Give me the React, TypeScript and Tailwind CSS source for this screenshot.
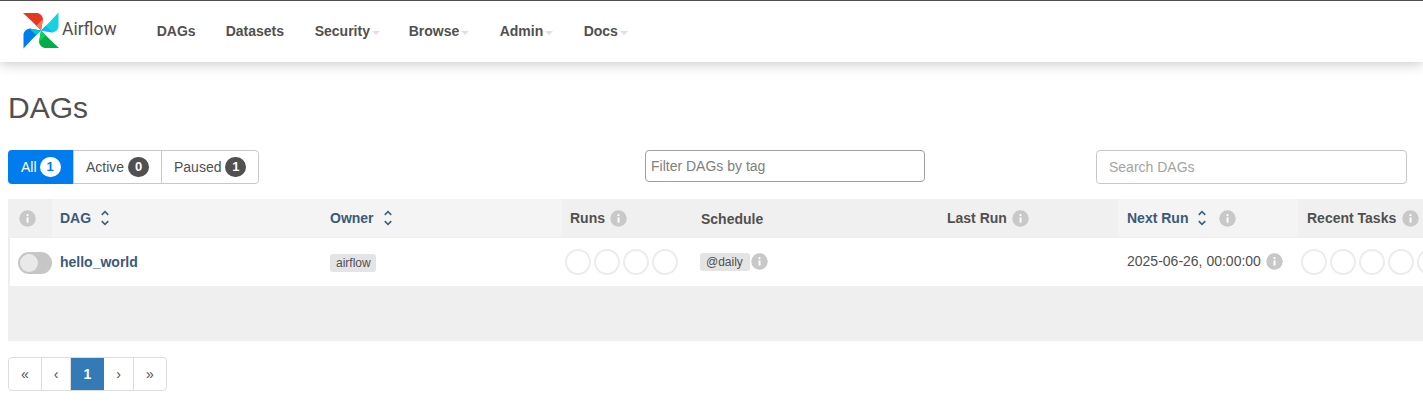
const font = "font-['Liberation_Sans',Arial,sans-serif]";

function Info({ className = "" }: { className?: string }) {
  return (
    <svg width="17" height="17" viewBox="0 0 17 17" className={"shrink-0 " + className}>
      <circle cx="8.5" cy="8.5" r="8.25" fill="#c8c8c8" />
      <rect x="7.6" y="7.4" width="1.9" height="5.2" fill="#fff" />
      <circle cx="8.5" cy="5.2" r="1.1" fill="#fff" />
    </svg>
  );
}

function Sort() {
  return (
    <svg width="20" height="20" viewBox="0 0 24 24" fill="#3f5f7c" className="shrink-0">
      <path d="M12 5.83 15.17 9l1.41-1.41L12 3 7.41 7.59 8.83 9 12 5.83zm0 12.34L8.83 15l-1.41 1.41L12 21l4.59-4.59L15.17 15 12 18.17z" />
    </svg>
  );
}

function Blade({ angle, main, light }: { angle: number; main: string; light: string }) {
  return (
    <g transform={`rotate(${angle} 19 19.5)`}>
      <path d="M1 2 L15.5 2 Q20 3 21 8 L19 19.5 Q11 11 1 2z" fill={main} />
      <path d="M21 8 L19 19.5 L14.5 14.5 Q18 11 21 8z" fill={light} />
    </g>
  );
}

function Logo() {
  return (
    <svg width="38" height="38" viewBox="0 0 38 38" className="shrink-0">
      <Blade angle={0} main="#e43921" light="#ff7557" />
      <Blade angle={90} main="#11d4e0" light="#0cb6ff" />
      <Blade angle={180} main="#00ad46" light="#04d659" />
      <Blade angle={270} main="#017cee" light="#00c7d4" />
    </svg>
  );
}

function Nav({ label, caret = false, className = "" }: { label: string; caret?: boolean; className?: string }) {
  return (
    <span className={"flex items-center text-[14px] font-bold text-[#51504f] " + className}>
      {label}
      {caret && <span className="ml-[2px] mt-[2px] h-0 w-0 border-x-[4px] border-t-[4px] border-x-transparent border-t-[#e6dbe6]" />}
    </span>
  );
}

function Circles({ n }: { n: number }) {
  return (
    <div className="flex gap-[3px]">
      {Array.from({ length: n }).map((_, i) => (
        <span key={i} className="h-[26px] w-[26px] shrink-0 rounded-full border-2 border-[#ececec] bg-white" />
      ))}
    </div>
  );
}

function Tab({ label, n, active = false, className = "" }: { label: string; n: number; active?: boolean; className?: string }) {
  return (
    <span
      className={
        "flex items-center " +
        (active ? "gap-[3px] bg-[#017cee] text-white " : "gap-[4px] border-y border-r border-[#c8c8c8] bg-white text-[#51504f] ") +
        className
      }
    >
      {label}
      <span
        className={
          "flex h-[20px] w-[21px] items-center justify-center rounded-full text-[13px] font-bold " +
          (active ? "bg-white text-[#017cee]" : "bg-[#51504f] text-white")
        }
      >
        {n}
      </span>
    </span>
  );
}

function HeadCell({ className = "", children }: { className?: string; children?: React.ReactNode }) {
  return <div className={"flex h-full shrink-0 items-center text-[14px] font-bold " + className}>{children}</div>;
}

function Page({ label, className = "" }: { label: string; className?: string }) {
  return (
    <span className={"flex h-full items-center justify-center border-r border-[#ddd] text-[14px] text-[#51504f] " + className}>
      {label}
    </span>
  );
}

export default function App() {
  return (
    <div className={"h-[414px] w-[1423px] overflow-hidden bg-white text-[#51504f] " + font}>
      <header className="flex h-[62px] items-center border-t border-[#51504f] bg-white pl-[22px] shadow-[0_2px_12px_rgba(0,0,0,0.22)]">
        <div className="mt-[-4px] flex items-center">
          <Logo />
          <span className="ml-[2px] mt-[-1px] font-['Roboto',sans-serif] text-[17.5px] text-[#51504f]">Airflow</span>
        </div>
        <nav className="ml-[40px] flex items-center">
          <Nav label="DAGs" className="w-[69px]" />
          <Nav label="Datasets" className="w-[89px]" />
          <Nav label="Security" caret className="w-[94px]" />
          <Nav label="Browse" caret className="w-[91px]" />
          <Nav label="Admin" caret className="w-[84px]" />
          <Nav label="Docs" caret />
        </nav>
      </header>

      <main className="px-[8px]">
        <h1 className="mt-[29px] text-[30px] leading-[33px] text-[#51504f]">DAGs</h1>

        <div className="mt-[26px] flex h-[34px] items-start">
          <div className="flex h-[34px] w-[251px] overflow-hidden rounded-[4px] text-[14px]">
            <Tab label="All" n={1} active className="w-[65px] pl-[13px]" />
            <Tab label="Active" n={0} className="w-[89px] border-l pl-[12px]" />
            <Tab label="Paused" n={1} className="w-[97px] rounded-r-[4px] pl-[12px]" />
          </div>
          <input
            placeholder="Filter DAGs by tag"
            className="ml-[386px] h-[32px] w-[280px] rounded-[4px] border border-[#a0a0a0] bg-white px-[5px] text-[14px] outline-none placeholder:text-[#808080]"
          />
          <input
            placeholder="Search DAGs"
            className="ml-[171px] h-[34px] w-[311px] rounded-[4px] border border-[#c8c8c8] bg-white px-[12px] text-[14px] outline-none placeholder:text-[#a3a3a3]"
          />
        </div>

        <section className="mt-[15px] w-[1415px] overflow-hidden">
          <div className="flex h-[39px] w-[1500px] border-b border-[#eee] bg-[#f0f0f0]">
            <HeadCell className="w-[44px] pl-[11px]"><Info /></HeadCell>
            <HeadCell className="w-[270px] gap-[4px] bg-[#f4f4f4] pl-[8px] text-[#3a5b79]">DAG <Sort /></HeadCell>
            <HeadCell className="w-[240px] gap-[4px] bg-[#f4f4f4] pl-[8px] text-[#3a5b79]">Owner <Sort /></HeadCell>
            <HeadCell className="w-[131px] gap-[5px] pl-[8px]">Runs <Info /></HeadCell>
            <HeadCell className="w-[246px] pl-[8px] pt-[2px]">Schedule</HeadCell>
            <HeadCell className="w-[179px] gap-[5px] pl-[8px]">Last Run <Info /></HeadCell>
            <HeadCell className="w-[180px] gap-[4px] bg-[#f4f4f4] pl-[9px] text-[#3a5b79]">
              Next Run <Sort /> <Info className="ml-[3px]" />
            </HeadCell>
            <HeadCell className="gap-[6px] pl-[9px]">Recent Tasks <Info /></HeadCell>
          </div>

          <div className="flex h-[48px] w-[1500px] items-center border-l-2 border-[#eee] bg-white text-[14px]">
            <div className="flex w-[42px] shrink-0 justify-start pl-[8px] pt-[1px]">
              <span className="flex h-[22px] w-[34px] items-center rounded-full bg-[#c6c6c6] pl-[2px]">
                <span className="h-[18px] w-[18px] rounded-full bg-[#e9e9e9]" />
              </span>
            </div>
            <div className="w-[270px] shrink-0 pl-[8px] font-bold text-[#3a5b79]">hello_world</div>
            <div className="w-[240px] shrink-0 pl-[8px]">
              <span className="inline-block h-[18px] w-[46px] rounded-[3px] bg-[#e4e4e4] pl-[6px] text-[12px] leading-[18px]">airflow</span>
            </div>
            <div className="w-[131px] shrink-0 pl-[3px]"><Circles n={4} /></div>
            <div className="flex w-[246px] shrink-0 items-center gap-[1px] pl-[7px] pb-[1px]">
              <span className="inline-block h-[18px] w-[50px] rounded-[3px] bg-[#e4e4e4] pl-[6px] text-[12px] leading-[18px]">@daily</span>
              <Info />
            </div>
            <div className="w-[179px] shrink-0" />
            <div className="flex w-[180px] shrink-0 items-center gap-[5px] pb-[1px] pl-[9px]">
              2025-06-26, 00:00:00 <Info />
            </div>
            <div className="pl-[3px]"><Circles n={7} /></div>
          </div>

          <div className="h-[55px] bg-[#efefef]" />
        </section>

        <nav className="mt-[16px] flex h-[34px] w-[159px] items-stretch overflow-hidden rounded-[4px] border border-[#ddd]">
          <Page label="«" className="w-[33px]" />
          <Page label="‹" className="w-[29px]" />
          <span className="flex h-full w-[33px] items-center justify-center bg-[#337ab7] text-[14px] font-bold text-white">1</span>
          <Page label="›" className="w-[30px]" />
          <span className="flex h-full flex-1 items-center justify-center text-[14px] text-[#51504f]">»</span>
        </nav>
      </main>
    </div>
  );
}
